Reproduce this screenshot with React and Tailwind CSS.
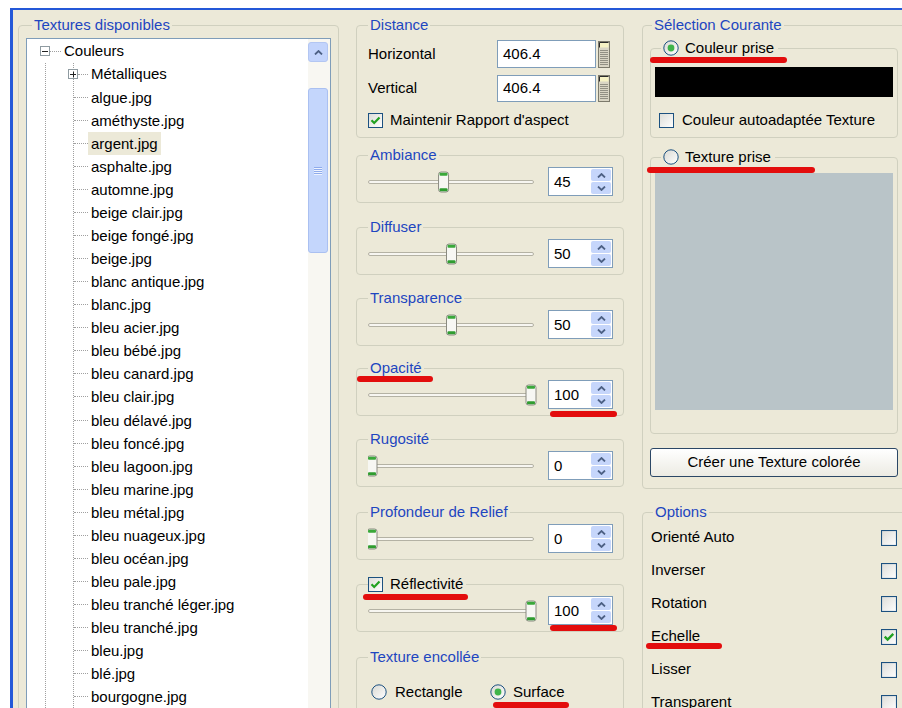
import React from 'react';

const textures = [
  'algue.jpg', 'améthyste.jpg', 'argent.jpg', 'asphalte.jpg', 'automne.jpg',
  'beige clair.jpg', 'beige fongé.jpg', 'beige.jpg', 'blanc antique.jpg', 'blanc.jpg',
  'bleu acier.jpg', 'bleu bébé.jpg', 'bleu canard.jpg', 'bleu clair.jpg', 'bleu délavé.jpg',
  'bleu foncé.jpg', 'bleu lagoon.jpg', 'bleu marine.jpg', 'bleu métal.jpg', 'bleu nuageux.jpg',
  'bleu océan.jpg', 'bleu pale.jpg', 'bleu tranché léger.jpg', 'bleu tranché.jpg', 'bleu.jpg',
  'blé.jpg', 'bourgogne.jpg',
];

const sliders = [
  { title: 'Ambiance', value: 45, mt: 'mt-[8px]' },
  { title: 'Diffuser', value: 50, mt: 'mt-[15px]' },
  { title: 'Transparence', value: 50, mt: 'mt-[14px]' },
  { title: 'Opacité', value: 100, mt: 'mt-[13px]' },
  { title: 'Rugosité', value: 0, mt: 'mt-[14px]' },
  { title: 'Profondeur de Relief', value: 0, mt: 'mt-[16px]' },
];

const options = [
  { label: 'Orienté Auto', checked: false },
  { label: 'Inverser', checked: false },
  { label: 'Rotation', checked: false },
  { label: 'Echelle', checked: true },
  { label: 'Lisser', checked: false },
  { label: 'Transparent', checked: false },
];

// red pen strokes under the fields of interest: [left, top, width]
const marks = [
  [650, 57, 137],
  [647, 167, 168],
  [357, 376, 76],
  [550, 411, 67],
  [363, 594, 105],
  [550, 625, 67],
  [493, 702, 76],
  [646, 643, 76],
];

function Check({ checked = false, size = 15 }) {
  return (
    <svg width={size} height={size} viewBox="0 0 15 15" className="shrink-0">
      <defs>
        <linearGradient id="chk" x1="0" y1="0" x2="1" y2="1">
          <stop offset="0" stopColor="#dcdcd7" />
          <stop offset="1" stopColor="#ffffff" />
        </linearGradient>
      </defs>
      <rect x="0.5" y="0.5" width="14" height="14" fill="url(#chk)" stroke="#1c5180" />
      {checked && (
        <path d="M3.5 7.2 L6.2 10 L11.5 4.6" fill="none" stroke="#21a121" strokeWidth="2.2" />
      )}
    </svg>
  );
}

function Radio({ checked = false }) {
  return (
    <svg width="16" height="16" viewBox="0 0 16 16" className="shrink-0">
      <defs>
        <linearGradient id="rad" x1="0" y1="0" x2="1" y2="1">
          <stop offset="0" stopColor="#d8d8d2" />
          <stop offset="1" stopColor="#ffffff" />
        </linearGradient>
      </defs>
      <circle cx="8" cy="8" r="7.2" fill="url(#rad)" stroke="#1c5180" />
      {checked && <circle cx="8" cy="8" r="3.4" fill="#3fb44a" />}
    </svg>
  );
}

function Expander({ open }) {
  return (
    <svg width="10" height="10" viewBox="0 0 10 10" className="shrink-0">
      <rect x="0.5" y="0.5" width="9" height="9" fill="#fff" stroke="#8f9ba1" />
      <path d="M2 5.5H8" stroke="#222" />
      {!open && <path d="M5.5 2.5V8.5" stroke="#222" />}
    </svg>
  );
}

function Chevron({ up }) {
  return (
    <svg width="9" height="5" viewBox="0 0 9 5">
      <path
        d={up ? 'M1 4.5 L4.5 1 L8 4.5' : 'M1 0.5 L4.5 4 L8 0.5'}
        fill="none"
        stroke="#4d6185"
        strokeWidth="1.8"
      />
    </svg>
  );
}

function SpinBox({ value }) {
  return (
    <div className="flex h-[29px] w-[65px] shrink-0 border border-[#7f9db9] bg-white">
      <span className="flex-1 pl-[5px] leading-[27px]">{value}</span>
      <div className="flex w-[22px] flex-col gap-px p-px">
        <div className="flex flex-1 items-center justify-center rounded-[2px] bg-[#c6d6fb]">
          <Chevron up />
        </div>
        <div className="flex flex-1 items-center justify-center rounded-[2px] bg-[#c6d6fb]">
          <Chevron />
        </div>
      </div>
    </div>
  );
}

function Slider({ value }) {
  const x = 4 + value * 1.59;
  return (
    <svg width="172" height="28" className="shrink-0">
      <rect x="0.5" y="12.5" width="165" height="3" rx="1.5" fill="#f7f6f1" stroke="#b4b2a4" />
      <g transform={`translate(${x - 5.5},3.5)`}>
        <rect x="0.5" y="0.5" width="10" height="20" rx="2.5" fill="#f7f7f3" stroke="#8a8a80" />
        <rect x="1.5" y="1.2" width="8" height="3" rx="1" fill="#3aa83a" />
        <rect x="1.5" y="16.8" width="8" height="3" rx="1" fill="#2f9c2f" />
      </g>
    </svg>
  );
}

function CalcButton() {
  const dots = [];
  for (let r = 0; r < 8; r++) {
    for (let c = 0; c < 4; c++) {
      dots.push(<rect key={`${r}-${c}`} x={2.5 + c * 2} y={9 + r * 2} width="1" height="1" fill="#4a4a44" />);
    }
  }
  return (
    <svg width="12" height="27" viewBox="0 0 12 27" className="shrink-0">
      <rect x="0.5" y="0.5" width="11" height="26" fill="#d9d5c4" stroke="#7c7a6c" />
      <rect x="1.5" y="1.5" width="9" height="5" fill="#f6f2c4" />
      <path d="M1.5 6.5V1.5H10.5" fill="none" stroke="#2b2b2b" />
      {dots}
    </svg>
  );
}

function Group({ title, legendClass = 'ml-0 px-[2px]', className = '', children }) {
  return (
    <fieldset className={`rounded-[4px] border border-[#d0d0bf] ${className}`}>
      <legend className={`h-[18px] leading-[18px] text-[#1e46c0] ${legendClass}`}>{title}</legend>
      {children}
    </fieldset>
  );
}

function TreeRow({ children, highlight }) {
  return (
    <div className="flex h-[23.07px] items-center">
      <span className="w-[14px] border-t border-dotted border-[#a0a0a0]" />
      <span className={`px-[3px] leading-[23px] ${highlight ? 'bg-[#ece9d8]' : ''}`}>{children}</span>
    </div>
  );
}

function TreePanel() {
  return (
    <div className="flex h-[700px] w-[305px] border border-[#7f9db9] bg-white">
      <div className="flex-1 overflow-hidden pl-[13px] pt-[0.5px]">
        <div className="flex h-[23.07px] items-center">
          <Expander open />
          <span className="w-[11px] border-t border-dotted border-[#a0a0a0]" />
          <span className="ml-[3px]">Couleurs</span>
        </div>
        <div className="ml-[5px] border-l border-dotted border-[#a0a0a0]">
          <div className="ml-[27px] border-l border-dotted border-[#a0a0a0]">
            <div className="flex h-[23.07px] items-center">
              <span className="-ml-[6px] flex">
                <Expander />
              </span>
              <span className="w-[10px] border-t border-dotted border-[#a0a0a0]" />
              <span className="px-[3px]">Métalliques</span>
            </div>
            {textures.map((t) => (
              <TreeRow key={t} highlight={t === 'argent.jpg'}>
                {t}
              </TreeRow>
            ))}
          </div>
        </div>
      </div>
      <div className="flex w-[22px] flex-col bg-[#f8f7f2] pr-[2px] pt-[3px]">
        <div className="flex h-[20px] items-center justify-center rounded-[3px] border border-[#b3c6f2] bg-[#c3d4fc]">
          <Chevron up />
        </div>
        <div className="mt-[26px] flex h-[165px] items-center justify-center rounded-[3px] border border-[#aac0f1] bg-[#c4d6fc]">
          <svg width="8" height="8" viewBox="0 0 8 8">
            {[0, 2, 4, 6].map((y) => (
              <g key={y}>
                <rect x="0" y={y} width="8" height="1" fill="#8eabec" />
                <rect x="0" y={y + 1} width="8" height="1" fill="#eef3fe" />
              </g>
            ))}
          </svg>
        </div>
      </div>
    </div>
  );
}

function SliderGroup({ title, value, mt }) {
  return (
    <Group title={title} className={`h-[57px] pl-[11px] pr-[9px] ${mt}`}>
      <div className="flex items-center pt-[3px]">
        <Slider value={value} />
        <span className="ml-[8px]">
          <SpinBox value={value} />
        </span>
      </div>
    </Group>
  );
}

export default function App() {
  return (
    <div className="relative h-[708px] w-[902px] overflow-hidden bg-white font-['Liberation_Sans',Arial,sans-serif] text-[15px] text-black">
      <div className="ml-[10px] mt-[8px] h-[700px] border-l-[3px] border-t-2 border-[#2458d8] bg-[#ece9d8]">
        <div className="flex pt-[6px]">
          {/* texture tree */}
          <Group
            title="Textures disponibles"
            legendClass="ml-[6px] px-[2px]"
            className="ml-[5px] h-[720px] w-[321px] shrink-0 px-[7px] pt-[4px]"
          >
            <TreePanel />
          </Group>

          {/* material settings */}
          <div className="ml-[17px] flex w-[268px] shrink-0 flex-col">
            <Group title="Distance" className="h-[122px] pl-[11px] pr-[9px] pt-[6px]">
              <div className="flex h-[28px] items-center">
                <span className="w-[129px]">Horizontal</span>
                <span className="flex h-[28px] w-[99px] items-center border border-[#7f9db9] bg-white pl-[5px]">406.4</span>
                <span className="ml-[2px] flex">
                  <CalcButton />
                </span>
              </div>
              <div className="mt-[7px] flex h-[27px] items-center">
                <span className="w-[129px]">Vertical</span>
                <span className="flex h-[27px] w-[99px] items-center border border-[#7f9db9] bg-white pl-[5px]">406.4</span>
                <span className="ml-[2px] flex">
                  <CalcButton />
                </span>
              </div>
              <div className="mt-[9px] flex h-[18px] items-center gap-[7px]">
                <Check checked />
                <span>Maintenir Rapport d'aspect</span>
              </div>
            </Group>

            {sliders.map((s) => (
              <SliderGroup key={s.title} {...s} />
            ))}

            <fieldset className="mt-[15px] h-[57px] rounded-[4px] border border-[#d0d0bf] pl-[11px] pr-[9px]">
              <legend className="h-[18px] px-0">
                <span className="flex h-[18px] items-center gap-[7px] pr-[3px]">
                  <Check checked />
                  <span>Réflectivité</span>
                </span>
              </legend>
              <div className="flex items-center pt-[3px]">
                <Slider value={100} />
                <span className="ml-[8px]">
                  <SpinBox value={100} />
                </span>
              </div>
            </fieldset>

            <Group title="Texture encollée" className="mt-[16px] h-[80px] pl-[11px] pt-[16px]">
              <div className="flex h-[20px] items-center">
                <span className="ml-[3px] flex w-[119px] items-center gap-[8px]">
                  <Radio />
                  <span>Rectangle</span>
                </span>
                <span className="flex items-center gap-[7px]">
                  <Radio checked />
                  <span>Surface</span>
                </span>
              </div>
            </Group>
          </div>

          {/* current selection + options */}
          <div className="ml-[18px] flex w-[264px] shrink-0 flex-col">
            <Group
              title="Sélection Courante"
              legendClass="ml-[2px] px-[2px]"
              className="h-[473px] px-[7px]"
            >
              <fieldset className="mt-[5px] h-[99px] rounded-[4px] border border-[#d0d0bf] px-[4px]">
                <legend className="ml-[6px] h-[18px] px-[2px]">
                  <span className="flex h-[18px] items-center gap-[6px] pr-[2px]">
                    <Radio checked />
                    <span>Couleur prise</span>
                  </span>
                </legend>
                <div className="mt-[10px] h-[30px] bg-black" />
                <div className="ml-[4px] mt-[15px] flex h-[16px] items-center gap-[8px]">
                  <Check />
                  <span>Couleur autoadaptée Texture</span>
                </div>
              </fieldset>

              <fieldset className="mt-[10px] h-[286px] rounded-[4px] border border-[#d0d0bf] px-[4px]">
                <legend className="ml-[6px] h-[18px] px-[2px]">
                  <span className="flex h-[18px] items-center gap-[6px] pr-[2px]">
                    <Radio />
                    <span>Texture prise</span>
                  </span>
                </legend>
                <div className="mt-[7px] h-[237px] bg-[#b9c4c8]" />
              </fieldset>

              <button className="mt-[14px] flex h-[29px] w-full items-center justify-center rounded-[3px] border border-[#2b4766] bg-linear-to-b from-white to-[#ecebe3]">
                Créer une Texture colorée
              </button>
            </Group>

            <Group
              title="Options"
              legendClass="ml-[2px] px-[2px]"
              className="mt-[14px] h-[260px] px-[8px]"
            >
              {options.map((o) => (
                <div key={o.label} className="flex h-[33px] items-center justify-between">
                  <span>{o.label}</span>
                  <Check checked={o.checked} size={16} />
                </div>
              ))}
            </Group>
          </div>
        </div>
      </div>

      {marks.map(([x, y, w]) => (
        <div
          key={`${x}-${y}`}
          className="absolute h-[6px] rounded-full bg-[#e30d0d]"
          style={{ left: x, top: y, width: w }}
        />
      ))}
    </div>
  );
}
